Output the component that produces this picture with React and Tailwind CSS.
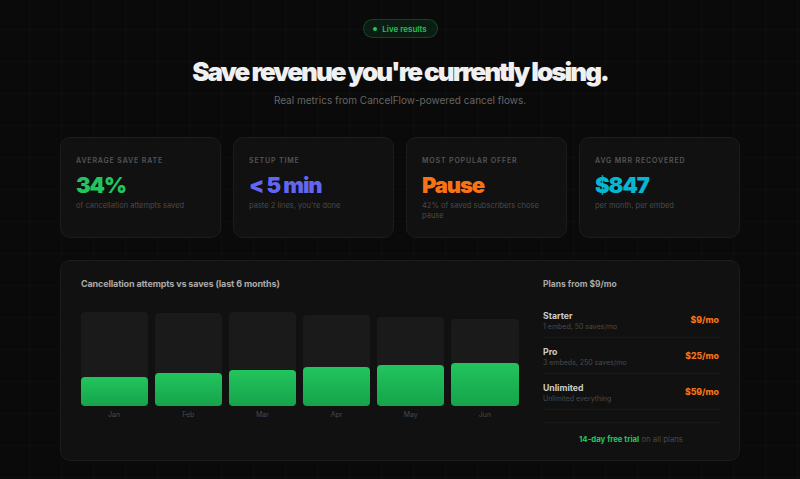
const stats = [
  { label: 'Average save rate', value: '34%', color: 'text-[#22c55e]', note: 'of cancellation attempts saved' },
  { label: 'Setup time', value: '< 5 min', color: 'text-[#6366f1]', note: "paste 2 lines, you're done" },
  { label: 'Most popular offer', value: 'Pause', color: 'text-[#f97316]', note: '42% of saved subscribers chose pause' },
  { label: 'Avg MRR recovered', value: '$847', color: 'text-[#06b6d4]', note: 'per month, per embed' },
];

const months = [
  { name: 'Jan', track: 'h-[94px]', fill: 'h-[29px]' },
  { name: 'Feb', track: 'h-[93px]', fill: 'h-[33px]' },
  { name: 'Mar', track: 'h-[94px]', fill: 'h-[36px]' },
  { name: 'Apr', track: 'h-[91px]', fill: 'h-[39px]' },
  { name: 'May', track: 'h-[89px]', fill: 'h-[41px]' },
  { name: 'Jun', track: 'h-[87px]', fill: 'h-[43px]' },
];

const plans = [
  { name: 'Starter', detail: '1 embed, 50 saves/mo', price: '$9/mo' },
  { name: 'Pro', detail: '3 embeds, 250 saves/mo', price: '$25/mo' },
  { name: 'Unlimited', detail: 'Unlimited everything', price: '$59/mo' },
];

export default function App() {
  return (
    <div className="h-[479px] overflow-hidden bg-[#0a0a0a] bg-[linear-gradient(rgba(255,255,255,0.015)_1px,transparent_1px),linear-gradient(90deg,rgba(255,255,255,0.015)_1px,transparent_1px)] bg-[size:32px_32px] bg-[position:-3px_-3px] px-[60px] pt-[19px] font-['Inter',sans-serif]">
      {/* header */}
      <div className="flex flex-col items-center">
        <div className="flex h-[19px] w-[75px] items-center justify-center gap-[5px] rounded-full border border-[#22c55e]/25 bg-[#22c55e]/10 text-[8px] font-semibold text-[#22c55e]">
          <span className="h-[4px] w-[4px] rounded-full bg-[#22c55e]" />
          Live results
        </div>
        <h1 className="mt-[17px] text-[26px] leading-[34px] font-black tracking-[-2px] text-[#f0f0f0]">
          Save revenue you're currently losing.
        </h1>
        <p className="mt-[3px] text-[10px] leading-[16px] text-[#666]">Real metrics from CancelFlow-powered cancel flows.</p>
      </div>

      {/* stat cards */}
      <div className="mt-[29px] grid grid-cols-4 gap-[12px]">
        {stats.map((s) => (
          <div key={s.label} className="h-[101px] rounded-[10px] border border-[#1c1c1c] bg-[#111] px-[15px] pt-[17px]">
            <div className="text-[7px] leading-[12px] font-semibold tracking-[0.85px] text-[#555] uppercase">{s.label}</div>
            <div className={`mt-[4px] text-[22px] leading-[28px] font-black tracking-[-1.1px] ${s.color}`}>{s.value}</div>
            <div className="mt-[2px] text-[7.5px] leading-[10px] text-[#4a4a4a]">{s.note}</div>
          </div>
        ))}
      </div>

      {/* chart + plans */}
      <div className="mt-[22px] flex h-[201px] rounded-[10px] border border-[#1c1c1c] bg-[#111] pt-[16px] pr-[20px] pl-[19.5px]">
        <div className="w-[438px]">
          <div className="pl-[0.5px] text-[9px] leading-[13px] font-bold tracking-[-0.14px] text-[#aaa]">Cancellation attempts vs saves (last 6 months)</div>
          <div className="mt-[22px] flex h-[94px] items-end gap-[7px]">
            {months.map((m) => (
              <div key={m.name} className={`relative flex-1 rounded-[4px] bg-[#1a1a1a] ${m.track}`}>
                <div className={`absolute inset-x-0 bottom-0 rounded-[4px] bg-gradient-to-b from-[#22c55e] to-[#16a34a] ${m.fill}`} />
              </div>
            ))}
          </div>
          <div className="mt-[4px] flex gap-[7px]">
            {months.map((m) => (
              <div key={m.name} className="flex-1 text-center text-[7px] leading-[10px] text-[#4a4a4a]">{m.name}</div>
            ))}
          </div>
        </div>

        <div className="ml-[24.5px] flex-1">
          <div className="pt-[1px] text-[8.5px] leading-[13px] font-bold text-[#aaa]">Plans from $9/mo</div>
          <div className="mt-[11px]">
            {plans.map((p) => (
              <div key={p.name} className="flex h-[36px] items-center justify-between border-b border-[#1a1a1a] pt-[2px]">
                <div>
                  <div className="text-[8.7px] leading-[12px] font-bold text-[#ccc]">{p.name}</div>
                  <div className="text-[7px] leading-[10px] text-[#4a4a4a]">{p.detail}</div>
                </div>
                <div className="text-[8.7px] font-extrabold text-[#f97316]">{p.price}</div>
              </div>
            ))}
          </div>
          <div className="mt-[12px] border-t border-[#1a1a1a] pt-[10px] text-center text-[7.8px] leading-[12px] text-[#4a4a4a]">
            <span className="font-bold text-[#22c55e]">14-day free trial</span> on all plans
          </div>
        </div>
      </div>
    </div>
  );
}
